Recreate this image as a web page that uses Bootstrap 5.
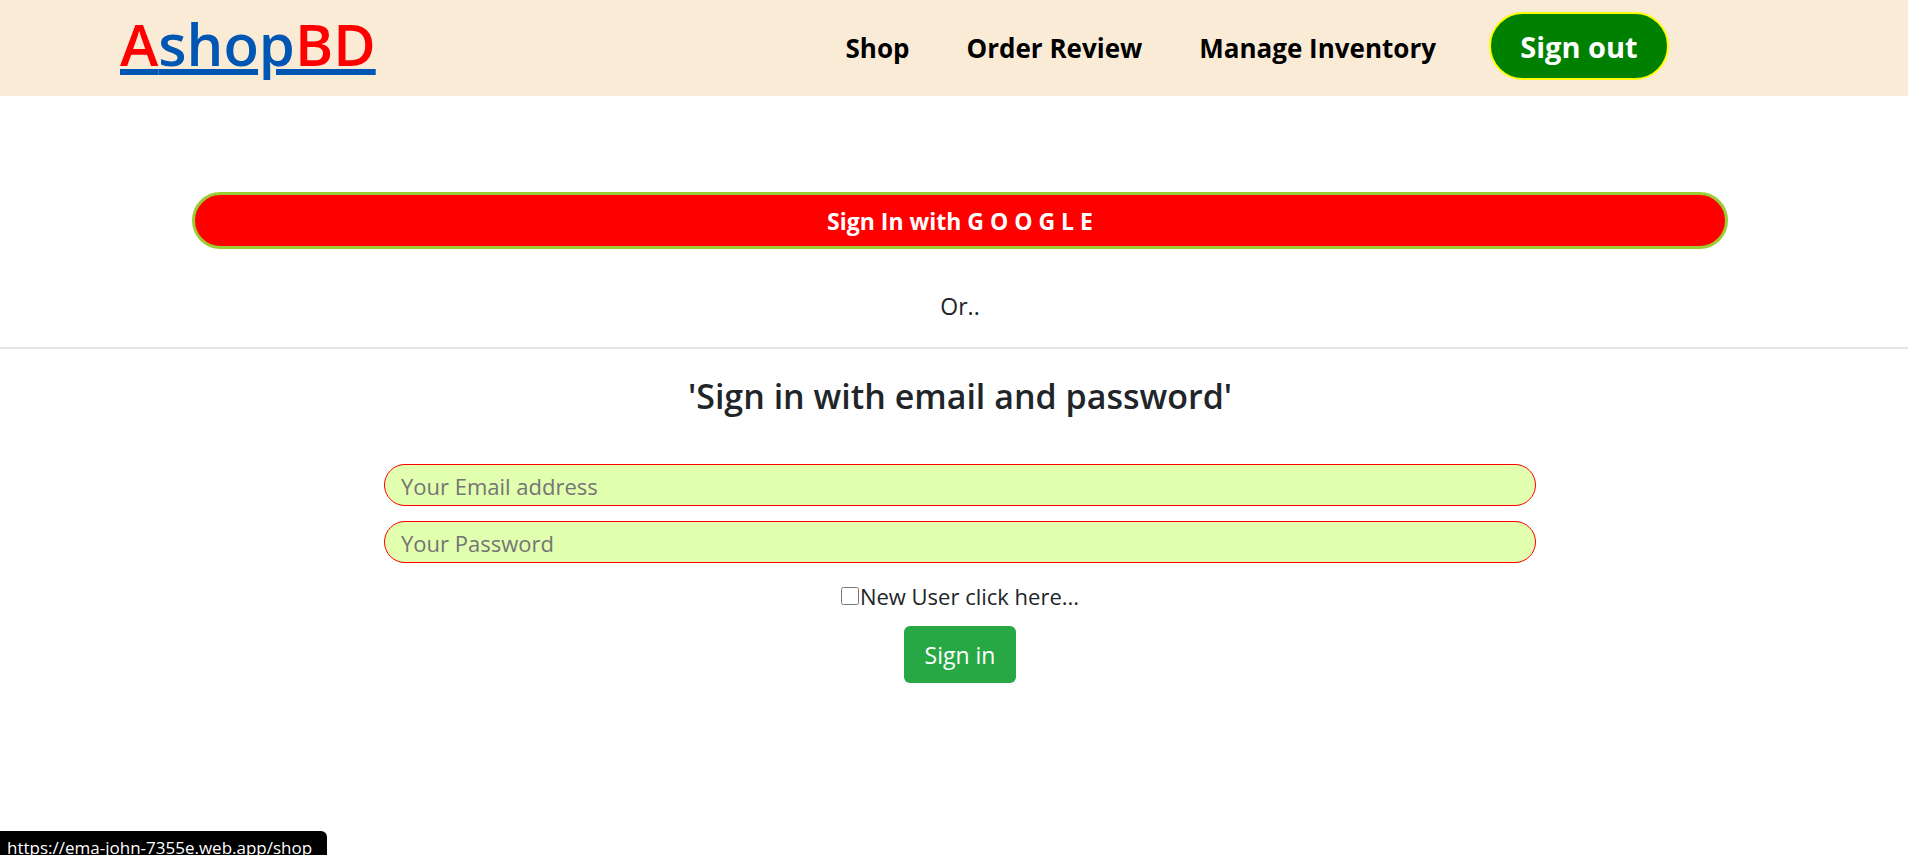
<!DOCTYPE html>
<html lang="en">
<head>
<meta charset="utf-8">
<meta name="viewport" content="width=device-width, initial-scale=1">
<title>AshopBD</title>
<link href="https://cdn.jsdelivr.net/npm/bootstrap@5.3.0/dist/css/bootstrap.min.css" rel="stylesheet">
<style>
  body { font-family: "Segoe UI", "Open Sans", "Noto Sans", sans-serif; font-size: 23px; line-height: 36px; color: #212529; overflow-x: hidden; }
  .shop-page { width: calc(100% + 12px); }
  .shop-header { background: #faebd7; height: 96px; padding: 0 251px 4px 120px; }
  .shop-brand { font-size: 58px; line-height: 72px; padding-bottom: 4px; font-weight: 600; color: #0056b3; text-decoration-thickness: 6px; text-underline-offset: 3px; }
  .shop-brand span { color: red; }
  .shop-links { gap: 57px; font-size: 26px; font-weight: 700; }
  .shop-links a { color: #000; text-decoration: none; padding-top: 4px; }
  .signout-btn { width: 180px; height: 68px; margin-left: -4px; padding-top: 2px; border: 2px solid yellow; border-radius: 34px; background: green; color: #fff; font-size: 29px; font-weight: 700; }
  .google-btn { width: 80%; height: 57px; margin-top: 96px; padding-top: 2px; border: 3px solid yellowgreen; border-radius: 29px; background: red; color: #fff; font-weight: 700; font-size: 23px; }
  .or-text { margin: 39px 0 23px; }
  .rule { width: 100%; height: 2px; margin: 0; border: 0; background: #000; opacity: .1; }
  .form-title { font-size: 34px; line-height: 44px; font-weight: 600; margin: 25px 0 46px; }
  .login-form { width: 60%; }
  .login-form input.field { width: 100%; height: 42px; margin-bottom: 15px; padding: 2px 16px 0; border: 1px solid red; border-radius: 21px; background: #e1ffaf; outline: 0; font-size: 22px; }
  .field::placeholder { color: #757575; }
  .new-user { font-size: 22px; }
  .new-user input { width: 18px; height: 18px; margin: 0 1px 0 0; }
  .signin-btn { width: 112px; height: 57px; margin-top: 12px; border: 0; border-radius: 6px; background: #28a745; color: #fff; }
  .link-status { height: 24px; padding: 0 15px 0 7px; background: #000; color: #fff; font-size: 17px; line-height: 34px; border-top-right-radius: 6px; overflow: hidden; }
</style>
</head>
<body>
<div class="shop-page">
  <header class="shop-header d-flex align-items-center justify-content-between">
    <a class="shop-brand" href="#"><span>A</span>shop<span>BD</span></a>
    <nav class="shop-links d-flex align-items-center">
      <a href="#">Shop</a>
      <a href="#">Order Review</a>
      <a href="#">Manage Inventory</a>
      <button type="button" class="signout-btn">Sign out</button>
    </nav>
  </header>
  <main class="d-flex flex-column align-items-center">
    <button type="button" class="google-btn">Sign In with G O O G L E</button>
    <p class="or-text">Or..</p>
    <hr class="rule">
    <h1 class="form-title">'Sign in with email and password'</h1>
    <form class="login-form d-flex flex-column align-items-center">
      <input class="field" type="email" placeholder="Your Email address" aria-label="Your Email address">
      <input class="field" type="password" placeholder="Your Password" aria-label="Your Password">
      <div class="new-user d-flex align-items-center">
        <input type="checkbox" id="newUser"><label for="newUser">New User click here...</label>
      </div>
      <button type="submit" class="signin-btn">Sign in</button>
    </form>
  </main>
</div>
<div class="link-status position-fixed bottom-0 start-0">https://ema-john-7355e.web.app/shop</div>
<script src="https://cdn.jsdelivr.net/npm/bootstrap@5.3.0/dist/js/bootstrap.bundle.min.js"></script>
</body>
</html>
